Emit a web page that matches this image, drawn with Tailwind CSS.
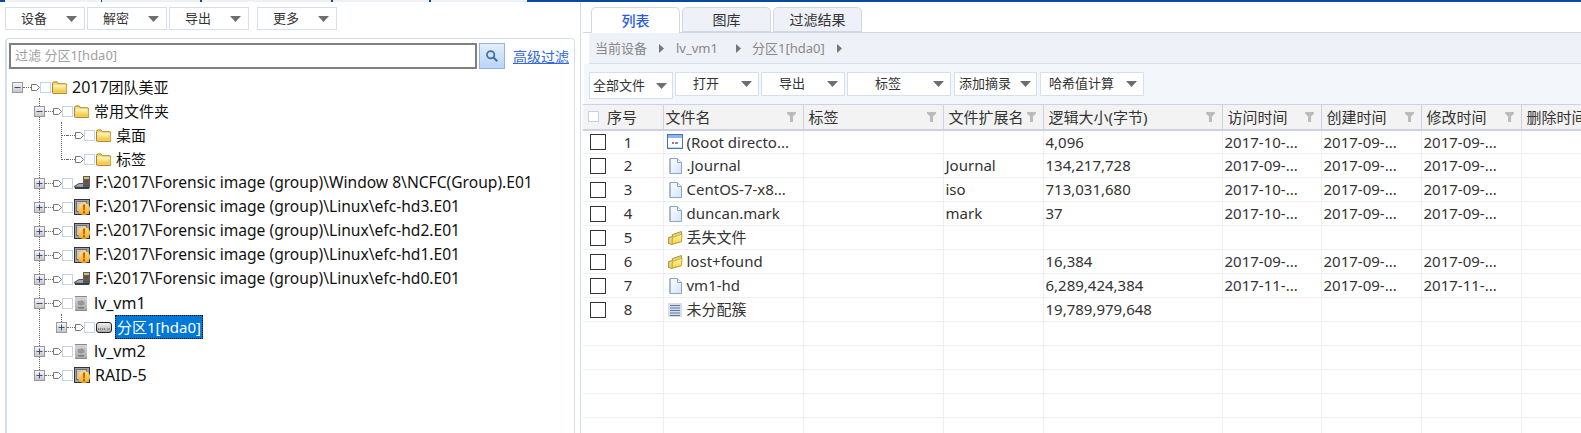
<!DOCTYPE html>
<html lang="zh-CN">
<head>
  <meta charset="UTF-8" />
  <title>取证分析</title>
  <script src="https://cdn.jsdelivr.net/npm/@tailwindcss/browser@4"></script>
</head>
<body class="w-[1581px] h-[433px] overflow-hidden bg-white text-[#222] font-['Noto_Sans','Noto_Sans_CJK_SC',sans-serif]">

  <!-- icons -->
  <svg class="absolute w-0 h-0">
    <defs>
      <linearGradient id="gExp" x1="0" y1="0" x2="0" y2="1"><stop offset="0" stop-color="#f8f8f8"/><stop offset="1" stop-color="#c4c4c4"/></linearGradient>
      <linearGradient id="gFolder" x1="0" y1="0" x2="0" y2="1"><stop offset="0" stop-color="#fff4b0"/><stop offset="1" stop-color="#f2c23e"/></linearGradient>
      <linearGradient id="gOpen" x1="0" y1="0" x2="0" y2="1"><stop offset="0" stop-color="#fff7a8"/><stop offset="1" stop-color="#f8d440"/></linearGradient>
      <linearGradient id="gFile" x1="0" y1="0" x2="1" y2="1"><stop offset="0" stop-color="#ffffff"/><stop offset="1" stop-color="#d0e2fa"/></linearGradient>
      <linearGradient id="gWarn" x1="0" y1="0" x2="0" y2="1"><stop offset="0" stop-color="#ffe680"/><stop offset="1" stop-color="#f6a81c"/></linearGradient>
      <linearGradient id="gLv" x1="0" y1="0" x2="0" y2="1"><stop offset="0" stop-color="#d8d8d8"/><stop offset="1" stop-color="#a8a8a8"/></linearGradient>
      <linearGradient id="gPart" x1="0" y1="0" x2="0" y2="1"><stop offset="0" stop-color="#f4f4f4"/><stop offset="1" stop-color="#a8a8a8"/></linearGradient>
    </defs>
    <symbol id="minus" viewBox="0 0 11 11"><rect x=".5" y=".5" width="10" height="10" fill="url(#gExp)" stroke="#999"/><path d="M2.5 5.5h6" stroke="#34508c"/></symbol>
    <symbol id="plus" viewBox="0 0 11 11"><rect x=".5" y=".5" width="10" height="10" fill="url(#gExp)" stroke="#999"/><path d="M2.5 5.5h6M5.5 2.5v6" stroke="#34508c"/></symbol>
    <symbol id="tag" viewBox="0 0 9 7"><path d="M.5.5h5l3 3-3 3h-5z" fill="#fff" stroke="#777"/></symbol>
    <symbol id="folder" viewBox="0 0 16 13"><path d="M.5 11.500v-9q0-2 2-2h3l1.500 2h7q2 0 2 1.500v8q0 1-1 1h-13.500q-1 0-1-1.500z" fill="#f0d070" stroke="#a87c10"/><path d="M1.500 4.500h13v7h-13z" fill="url(#gFolder)"/><path d="M1.500 4h13" stroke="#fffbe0"/></symbol>
    <symbol id="drive" viewBox="0 0 16 14"><path d="M0 10l5-3h11v4l-1 2H1z" fill="#55585c"/><path d="M1 12h14" stroke="#222"/><path d="M1 10.500l4-2.500h4v3z" fill="#a4a8ac"/><path d="M9 0h7v9H9z" fill="#5a5c60"/><path d="M10 1h5v2h-5z" fill="#c8c46a"/><path d="M12 4h2v3h-2z" fill="#b02a20"/></symbol>
    <symbol id="warn" viewBox="0 0 16 16"><rect x=".5" y=".5" width="15" height="15" fill="#a0a0a0" stroke="#333"/><rect x="2.500" y="2.500" width="10" height="10" fill="#c8c8c8" stroke="#707070"/><circle cx="10" cy="10" r="6" fill="url(#gWarn)"/><path d="M9 5.500h2l-.3 6h-1.400zM9 12.300h2v1.900H9z" fill="#d2480c"/></symbol>
    <symbol id="lv" viewBox="0 0 12 15"><rect width="12" height="15" fill="url(#gLv)"/><path d="M0 0h12v1H0zM0 14h12v1H0z" fill="#8a8a8a"/><ellipse cx="6" cy="7" rx="3.500" ry="2.500" fill="#989898"/><path d="M3 11h6v1.500H3z" fill="#787878"/></symbol>
    <symbol id="part" viewBox="0 0 16 11"><rect x=".5" y=".5" width="15" height="10" rx="2.500" fill="url(#gPart)" stroke="#222"/><path d="M2 7h8" stroke="#333" stroke-dasharray="1 1"/><path d="M11 7h3" stroke="#3a9a4a"/></symbol>
    <symbol id="root" viewBox="0 0 16 15"><rect x=".5" y=".5" width="15" height="14" fill="#fff" stroke="#3f74c0"/><path d="M1 1h14v3H1z" fill="#8fb6ea"/><path d="M5 8h2v2H5z" fill="#d8605a"/><path d="M8 8h3v2H8z" fill="#6a8fd0"/><path d="M1 13h14v1H1z" fill="#c4d6f0"/></symbol>
    <symbol id="file" viewBox="0 0 13 16"><path d="M1 .500h7.500l4 4v11H1z" fill="url(#gFile)" stroke="#8fa4c0"/><path d="M1 1v14.500" stroke="#a8bad2" stroke-width="2"/><path d="M8.500 .500v4h4" fill="#eef4fc" stroke="#8fa4c0"/></symbol>
    <symbol id="openfolder" viewBox="0 0 15 14"><path d="M.5 6.500l4-1v-2l9-3v10l-10 3-3-1z" fill="#e8d27a" stroke="#a8954a"/><path d="M4.500 6.500l9.500-3.500-.5 7.500-9.500 2.500z" fill="url(#gOpen)" stroke="#c8aa38"/></symbol>
    <symbol id="clusters" viewBox="0 0 14 14"><rect width="14" height="14" fill="#d8dde6"/><path d="M2 2.500h10M2 5h10M2 7.500h10M2 10h10M2 12.500h10" stroke="#5878ac"/></symbol>
    <symbol id="search" viewBox="0 0 16 16"><circle cx="6.500" cy="6.500" r="4.200" fill="none" stroke="#43709f" stroke-width="2"/><path d="M9.800 9.800l4.200 4.200" stroke="#43709f" stroke-width="2.400"/></symbol>
    <symbol id="caret" viewBox="0 0 11 6"><path d="M0 0h11l-5.500 6z" fill="#6e6e6e"/></symbol>
    <symbol id="crumb" viewBox="0 0 5 9"><path d="M0 0l5 4.500-5 4.500z" fill="#777"/></symbol>
    <symbol id="funnel" viewBox="0 0 9 10"><path d="M0 0h9v1.500l-3 3V10H3V4.500L0 1.500z" fill="#bbbbbb"/></symbol>
  </svg>

  <!-- top strip, window behind -->
  <div class="flex h-[2px] bg-[#eef1f6]">
    <div class="w-[5px] bg-[#0a4a9e]"></div>
    <div class="w-[96px]"></div>
    <div class="w-[1px] bg-[#0a4a9e]"></div>
    <div class="w-[98px]"></div>
    <div class="w-[2px] bg-[#0a4a9e]"></div>
    <div class="w-[129px]"></div>
    <div class="w-[2px] bg-[#0a4a9e]"></div>
    <div class="w-[96px]"></div>
    <div class="w-[2px] bg-[#0a4a9e]"></div>
    <div class="w-[96px]"></div>
    <div class="flex-1 bg-[#0a4a9e]"></div>
  </div>

  <div class="flex h-[431px]">

    <!-- left side -->
    <div class="w-[580px] shrink-0 pl-[5px] pt-[5px] flex flex-col">
      <div class="flex h-[23px] text-[13px] text-[#333]">
        <div class="flex items-center w-[80px] border border-[#d5dff0] pl-[15px] pr-[7px]">设备<svg class="w-[11px] h-[6px] ml-auto"><use href="#caret"/></svg></div>
        <div class="flex items-center w-[80px] ml-[2px] border border-[#d5dff0] pl-[15px] pr-[7px]">解密<svg class="w-[11px] h-[6px] ml-auto"><use href="#caret"/></svg></div>
        <div class="flex items-center w-[80px] ml-[2px] border border-[#d5dff0] pl-[15px] pr-[7px]">导出<svg class="w-[11px] h-[6px] ml-auto"><use href="#caret"/></svg></div>
        <div class="flex items-center w-[80px] ml-[8px] border border-[#d5dff0] pl-[15px] pr-[7px]">更多<svg class="w-[11px] h-[6px] ml-auto"><use href="#caret"/></svg></div>
      </div>

      <div class="mt-[8px] w-[570px] flex-1 border-l-2 border-r border-t border-[#d5dff0] rounded-tl-[4px] rounded-tr-[4px] pt-[4px] pl-[2px]">
        <div class="flex items-center h-[26px]">
          <div class="w-[468px] h-[26px] border-2 border-[#808080] flex items-center pl-[4px] text-[13px] text-[#a0a0a0]">过滤 分区1[hda0]</div>
          <div class="w-[26px] h-[26px] ml-[2px] border border-[#93b3dc] bg-[linear-gradient(#e3eefc,#b9d4f7)] flex items-center justify-center"><svg class="w-[14px] h-[14px]"><use href="#search"/></svg></div>
          <a class="ml-[8px] text-[14px] text-[#3366dd] underline">高级过滤</a>
        </div>
        <div id="tree" class="relative mt-[6px] -ml-[9px] text-[15px] text-[#111]"></div>
      </div>
    </div>

    <!-- splitter -->
    <div class="w-[1px] shrink-0 bg-[#cfdcf2]"></div>

    <!-- right side -->
    <div class="flex-1 min-w-0 pl-[2px] flex flex-col">
      <div class="flex h-[26px] mt-[5px] pl-[8px] border-b border-[#d0d8e8] relative">
        <div class="w-[89px] h-[26px] border border-b-0 border-[#d0d8e8] rounded-t-[5px] bg-white text-[#2a5ae0] text-[14px] font-medium flex items-center justify-center">列表</div>
        <div class="w-[89px] h-[25px] ml-[2px] border border-[#d0d8e8] rounded-t-[5px] bg-[#eef1f7] text-[#333] text-[14px] flex items-center justify-center">图库</div>
        <div class="w-[89px] h-[25px] ml-[2px] border border-[#d0d8e8] rounded-t-[5px] bg-[#eef1f7] text-[#333] text-[14px] flex items-center justify-center">过滤结果</div>
      </div>
      <div class="h-[31px] ml-[6px] bg-[#eef1f7] border-b border-[#d5dff0] flex items-center pl-[6px] pt-[1px] text-[13px] text-[#888]">
        <span>当前设备</span>
        <svg class="w-[5px] h-[9px] ml-[12px]"><use href="#crumb"/></svg>
        <span class="ml-[12px]">lv_vm1</span>
        <svg class="w-[5px] h-[9px] ml-[18px]"><use href="#crumb"/></svg>
        <span class="ml-[11px]">分区1[hda0]</span>
        <svg class="w-[5px] h-[9px] ml-[12px]"><use href="#crumb"/></svg>
      </div>
      <div class="h-[40px] ml-[1px] bg-[#f3f6fb] flex items-start pt-[8px] pl-[5px] text-[13px] text-[#333]">
        <div class="flex items-center w-[84px] h-[27px] bg-white border border-[#d5dff0] pl-[3px] pr-[5px]">全部文件<svg class="w-[11px] h-[6px] ml-auto"><use href="#caret"/></svg></div>
        <div class="flex items-center w-[84px] h-[24px] ml-[2px] bg-white border border-[#d5dff0] pl-[17px] pr-[6px]">打开<svg class="w-[11px] h-[6px] ml-auto"><use href="#caret"/></svg></div>
        <div class="flex items-center w-[84px] h-[24px] ml-[2px] bg-white border border-[#d5dff0] pl-[17px] pr-[6px]">导出<svg class="w-[11px] h-[6px] ml-auto"><use href="#caret"/></svg></div>
        <div class="flex items-center w-[104px] h-[24px] ml-[2px] bg-white border border-[#d5dff0] pl-[27px] pr-[6px]">标签<svg class="w-[11px] h-[6px] ml-auto"><use href="#caret"/></svg></div>
        <div class="flex items-center w-[83px] h-[24px] ml-[3px] bg-white border border-[#d5dff0] pl-[4px] pr-[5px]">添加摘录<svg class="w-[11px] h-[6px] ml-auto"><use href="#caret"/></svg></div>
        <div class="flex items-center w-[104px] h-[24px] ml-[3px] bg-white border border-[#d5dff0] pl-[8px] pr-[6px]">哈希值计算<svg class="w-[11px] h-[6px] ml-auto"><use href="#caret"/></svg></div>
      </div>
      <div class="flex-1 overflow-hidden">
        <table class="table-fixed border-collapse w-[1038px] text-[15px] text-[#333]">
          <colgroup>
            <col class="w-[80px]"/><col class="w-[140px]"/><col class="w-[140px]"/><col class="w-[100px]"/><col class="w-[179px]"/><col class="w-[99px]"/><col class="w-[100px]"/><col class="w-[100px]"/><col class="w-[100px]"/>
          </colgroup>
          <thead id="head"></thead>
          <tbody id="rows"></tbody>
        </table>
      </div>
    </div>
  </div>

  <script>
    const latin = 'text-[15.6px]';
    const folderSize = 'w-[15px] h-[13px]';
    const driveSize = 'w-[16px] h-[14px]';
    const warnSize = 'w-[16px] h-[16px]';
    const lvSize = 'w-[12px] h-[15px] ml-[2px] mr-[2px]';
    const tree = [
      { lvl: 0, exp: 'minus', icon: 'folder', w: folderSize, text: `<span class="text-[16px]">2017</span>团队美亚` },
      { lvl: 1, exp: 'minus', icon: 'folder', w: folderSize, text: '常用文件夹' },
      { lvl: 2, icon: 'folder', w: folderSize, text: '桌面' },
      { lvl: 2, icon: 'folder', w: folderSize, text: '标签' },
      { lvl: 1, exp: 'plus', icon: 'drive', w: driveSize, cls: latin, text: 'F:\\2017\\Forensic image (group)\\Window 8\\NCFC(Group).E01' },
      { lvl: 1, exp: 'plus', icon: 'warn', w: warnSize, cls: latin, text: 'F:\\2017\\Forensic image (group)\\Linux\\efc-hd3.E01' },
      { lvl: 1, exp: 'plus', icon: 'warn', w: warnSize, cls: latin, text: 'F:\\2017\\Forensic image (group)\\Linux\\efc-hd2.E01' },
      { lvl: 1, exp: 'plus', icon: 'warn', w: warnSize, cls: latin, text: 'F:\\2017\\Forensic image (group)\\Linux\\efc-hd1.E01' },
      { lvl: 1, exp: 'plus', icon: 'drive', w: driveSize, cls: latin, text: 'F:\\2017\\Forensic image (group)\\Linux\\efc-hd0.E01' },
      { lvl: 1, exp: 'minus', icon: 'lv', w: lvSize, cls: 'text-[16px]', text: 'lv_vm1' },
      { lvl: 2, exp: 'plus', icon: 'part', w: 'w-[16px] h-[11px]', text: '分区1[hda0]', sel: true },
      { lvl: 1, exp: 'plus', icon: 'lv', w: lvSize, cls: 'text-[16px]', text: 'lv_vm2' },
      { lvl: 1, exp: 'plus', icon: 'warn', w: warnSize, cls: 'text-[16px]', text: 'RAID-5' },
    ];
    const levelPad = ['pl-[12px]', 'pl-[34px]', 'pl-[56px]'];

    let treeHtml = `
      <div class="absolute left-[39px] top-[23px] h-[276px] border-l border-dotted border-[#666]"></div>
      <div class="absolute left-[61px] top-[47px] h-[36px] border-l border-dotted border-[#666]"></div>
      <div class="absolute left-[61px] top-[239px] h-[8px] border-l border-dotted border-[#666]"></div>`;
    tree.forEach(n => {
      const label = n.sel
        ? 'ml-[3px] px-[1px] h-[24px] flex items-center bg-[#0078d7] text-white border border-dotted border-black'
        : 'ml-[5px] h-[24px] flex items-center';
      treeHtml += `
      <div class="relative flex items-center h-[24px] ${levelPad[n.lvl]}">
        ${n.exp ? `<svg class="w-[11px] h-[11px] shrink-0"><use href="#${n.exp}"/></svg>`
                : `<div class="w-[11px] shrink-0 flex"><div class="ml-[5px] w-[6px] border-t border-dotted border-[#666]"></div></div>`}
        <div class="w-[8px] border-t border-dotted border-[#666] shrink-0"></div>
        <svg class="w-[9px] h-[7px] shrink-0"><use href="#tag"/></svg>
        <div class="w-[11px] h-[11px] border border-[#c2d2f4] bg-white shrink-0"></div>
        <svg class="${n.w} ml-[1px] shrink-0"><use href="#${n.icon}"/></svg>
        <div class="${label} ${n.cls || ''} whitespace-nowrap">${n.text}</div>
      </div>`;
    });
    document.getElementById('tree').innerHTML = treeHtml;

    const heads = ['文件名', '标签', '文件扩展名', '逻辑大小(字节)', '访问时间', '创建时间', '修改时间', '删除时间'];
    let headHtml = `<tr class="h-[25px] bg-[#f3f3f3]">
      <th class="p-0 font-normal border-y-2 border-t-[1px] border-r border-[#cfd0e2] text-left"><div class="flex items-center"><div class="ml-[5px] w-[11px] h-[11px] border border-[#c2d2f4] bg-white"></div><span class="ml-[8px]">序号</span></div></th>`;
    heads.forEach((h, i) => {
      const funnel = i < 7 ? '<svg class="absolute right-[7px] top-1/2 -translate-y-1/2 w-[9px] h-[10px]"><use href="#funnel"/></svg>' : '';
      const pad = i === 0 ? 'pl-[2px]' : 'pl-[5px]';
      headHtml += `<th class="p-0 font-normal border-y-2 border-t-[1px] border-r border-[#cfd0e2] text-left"><div class="relative ${pad} whitespace-nowrap overflow-hidden">${h}${funnel}</div></th>`;
    });
    document.getElementById('head').innerHTML = headHtml + '</tr>';

    const fileSize = 'w-[13px] h-[16px] ml-[2px] mr-[1px]';
    const openSize = 'w-[15px] h-[14px] ml-[1px]';
    const rows = [
      ['root', 'w-[16px] h-[15px]', '(Root directo...', '', '4,096', '2017-10-...', '2017-09-...', '2017-09-...'],
      ['file', fileSize, '.Journal', 'Journal', '134,217,728', '2017-09-...', '2017-09-...', '2017-09-...'],
      ['file', fileSize, 'CentOS-7-x8...', 'iso', '713,031,680', '2017-10-...', '2017-09-...', '2017-09-...'],
      ['file', fileSize, 'duncan.mark', 'mark', '37', '2017-10-...', '2017-09-...', '2017-09-...'],
      ['openfolder', openSize, '丢失文件', '', '', '', '', ''],
      ['openfolder', openSize, 'lost+found', '', '16,384', '2017-09-...', '2017-09-...', '2017-09-...'],
      ['file', fileSize, 'vm1-hd', '', '6,289,424,384', '2017-11-...', '2017-09-...', '2017-11-...'],
      ['clusters', 'w-[14px] h-[14px] ml-[1px] mr-[1px]', '未分配簇', '', '19,789,979,648', '', '', ''],
    ];
    const td = 'p-0 border-b border-r border-[#eeeeee] whitespace-nowrap overflow-hidden';
    let rowHtml = '';
    for (let i = 0; i < 13; i++) {
      const r = rows[i];
      if (!r) {
        rowHtml += `<tr class="h-[24px]">${('<td class="' + td + '"></td>').repeat(9)}</tr>`;
        continue;
      }
      rowHtml += `<tr class="h-[24px]">
        <td class="${td}"><div class="flex items-center"><div class="ml-[7px] w-[16px] h-[16px] border border-[#333] bg-white"></div><span class="w-[44px] text-center">${i + 1}</span></div></td>
        <td class="${td}"><div class="flex items-center pl-[3px]"><svg class="${r[1]} shrink-0"><use href="#${r[0]}"/></svg><span class="ml-[4px]">${r[2]}</span></div></td>
        <td class="${td}"></td>
        <td class="${td} pl-[2px]">${r[3]}</td>
        <td class="${td} pl-[2px]">${r[4]}</td>
        <td class="${td} pl-[2px]">${r[5]}</td>
        <td class="${td} pl-[2px]">${r[6]}</td>
        <td class="${td} pl-[2px]">${r[7]}</td>
        <td class="${td}"></td>
      </tr>`;
    }
    document.getElementById('rows').innerHTML = rowHtml;
  </script>
</body>
</html>
